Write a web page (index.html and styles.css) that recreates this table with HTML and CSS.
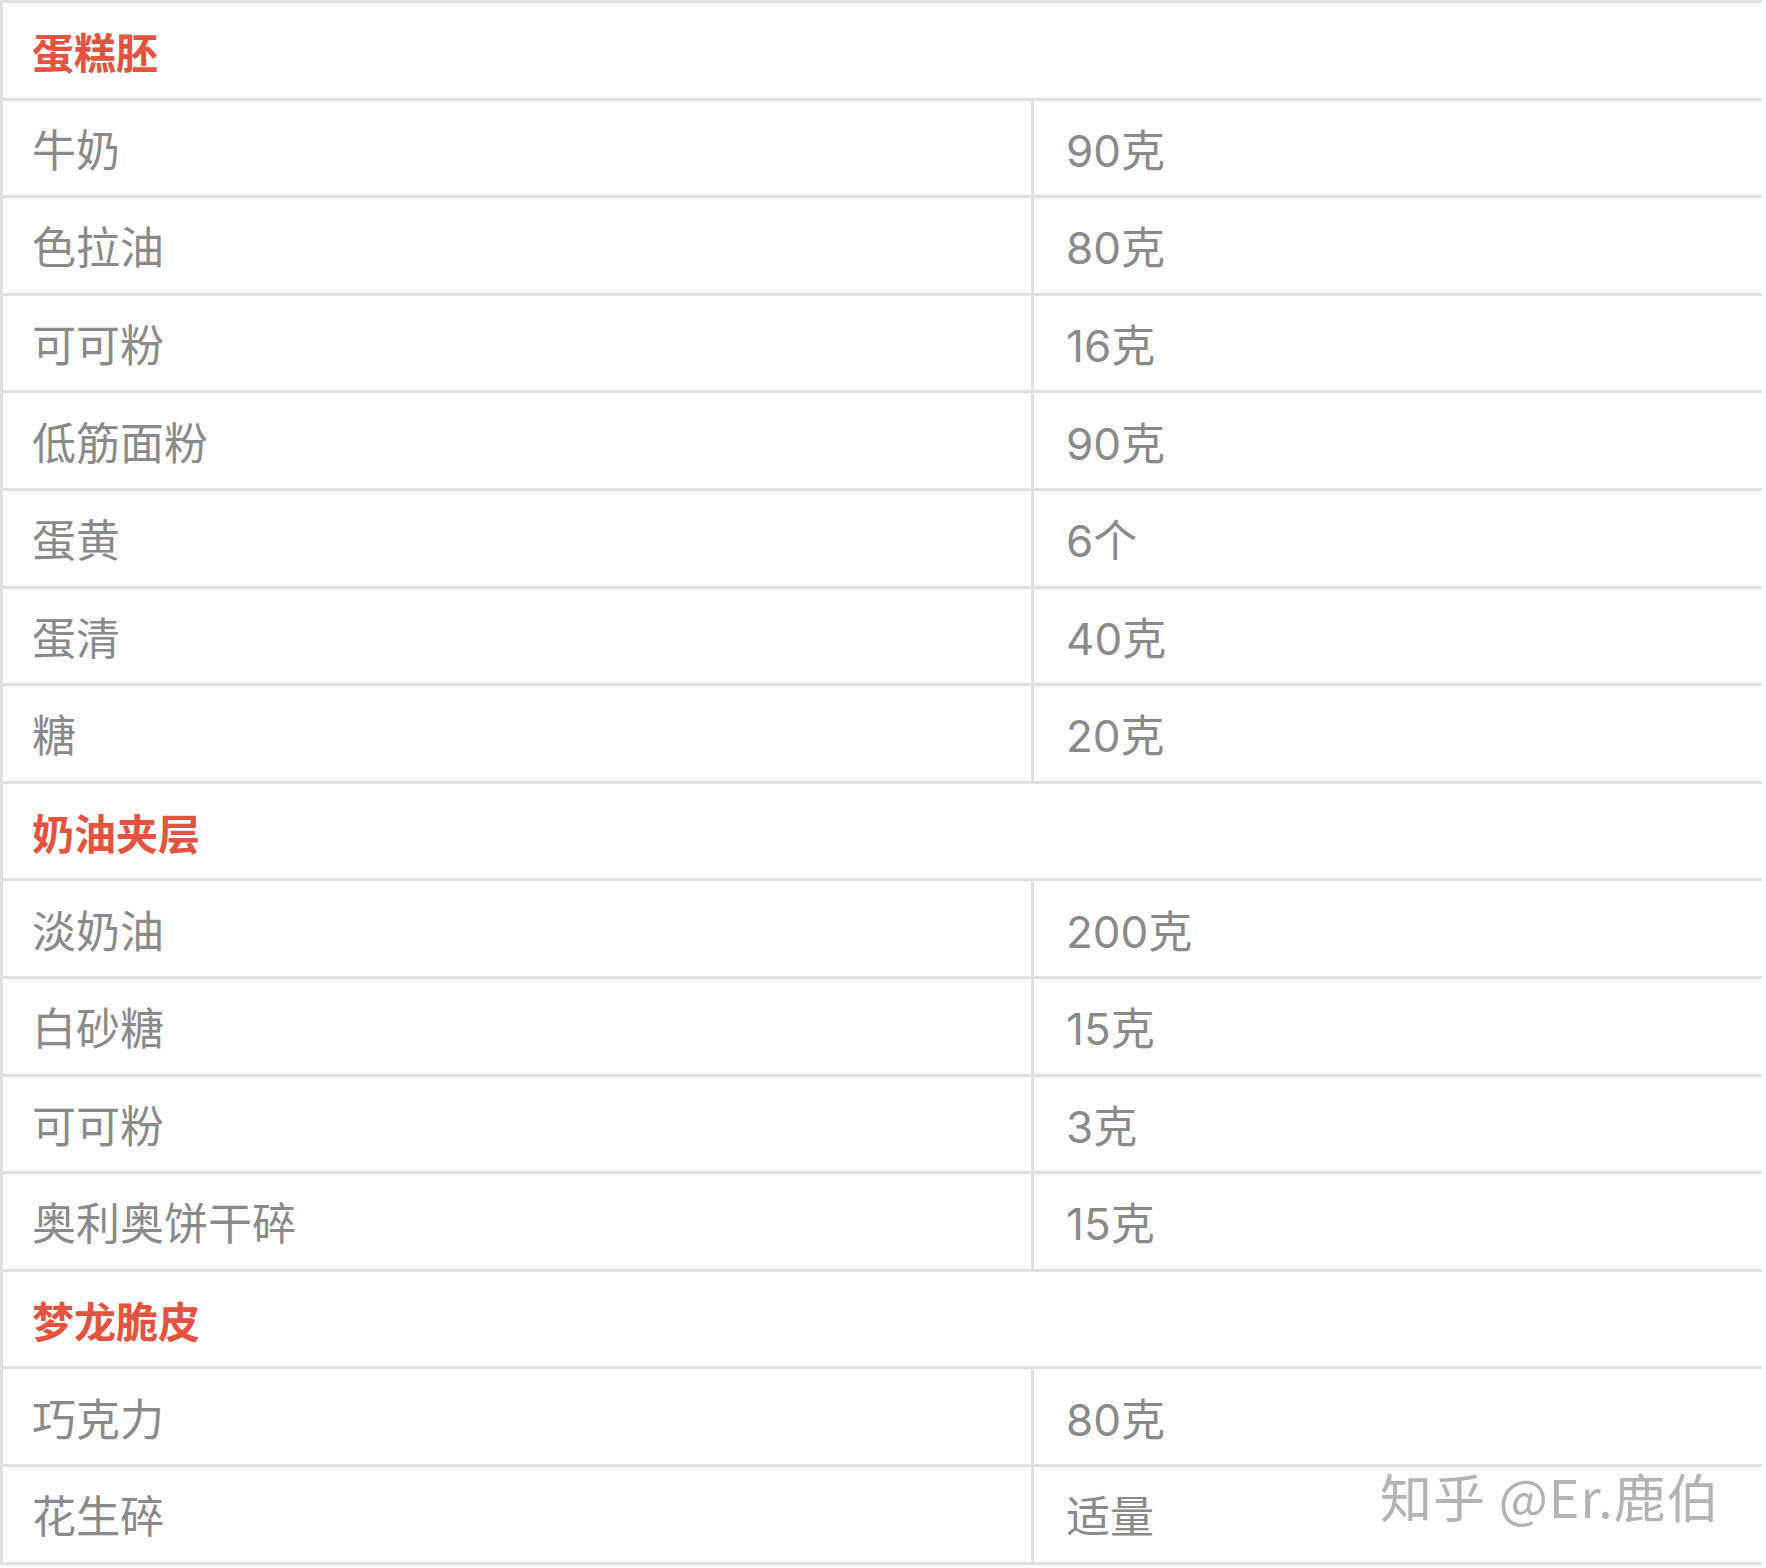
FILE: index.html
```html
<!DOCTYPE html>
<html lang="zh-CN">
<head>
<meta charset="utf-8">
<title>配方</title>
<link rel="stylesheet" href="styles.css">
</head>
<body>
<div class="page">
  <div class="table">
    <div class="row head"><div class="cell">蛋糕胚</div></div>
    <div class="row"><div class="cell name">牛奶</div><div class="cell val">90克</div></div>
    <div class="row"><div class="cell name">色拉油</div><div class="cell val">80克</div></div>
    <div class="row"><div class="cell name">可可粉</div><div class="cell val">16克</div></div>
    <div class="row"><div class="cell name">低筋面粉</div><div class="cell val">90克</div></div>
    <div class="row"><div class="cell name">蛋黄</div><div class="cell val">6个</div></div>
    <div class="row"><div class="cell name">蛋清</div><div class="cell val">40克</div></div>
    <div class="row"><div class="cell name">糖</div><div class="cell val">20克</div></div>
    <div class="row head"><div class="cell">奶油夹层</div></div>
    <div class="row"><div class="cell name">淡奶油</div><div class="cell val">200克</div></div>
    <div class="row"><div class="cell name">白砂糖</div><div class="cell val">15克</div></div>
    <div class="row"><div class="cell name">可可粉</div><div class="cell val">3克</div></div>
    <div class="row"><div class="cell name">奥利奥饼干碎</div><div class="cell val">15克</div></div>
    <div class="row head"><div class="cell">梦龙脆皮</div></div>
    <div class="row"><div class="cell name">巧克力</div><div class="cell val">80克</div></div>
    <div class="row"><div class="cell name">花生碎</div><div class="cell val">适量</div></div>
  </div>
  <div class="watermark">知乎 @Er.鹿伯</div>
</div>
</body>
</html>
```
FILE: styles.css
```css
html, body {
  margin: 0;
  padding: 0;
  background: #ffffff;
}
.page {
  position: relative;
  width: 1766px;
  height: 1568px;
  overflow: hidden;
  font-family: Inter, "Noto Sans CJK SC", sans-serif;
}
.table {
  width: 1759px;
  border-top: 3px solid #e0e0e0;
  border-left: 3px solid #e0e0e0;
}
.row {
  display: flex;
  height: 94.6px;
  border-bottom: 3px solid #e0e0e0;
}
.cell {
  display: flex;
  align-items: center;
  padding-left: 29px;
  font-size: 44px;
  color: #8a8a8a;
}
.name {
  width: 999px;
  border-right: 3px solid #e0e0e0;
}
.val {
  flex: 1;
  padding-left: 32px;
}
.head .cell {
  color: #e4533f;
  font-weight: 700;
  font-size: 42px;
  font-family: "Noto Sans CJK SC", sans-serif;
}
.watermark {
  position: absolute;
  left: 1380px;
  top: 1458px;
  font-size: 52px;
  color: #b3b3b3;
  font-family: "Noto Sans CJK SC", sans-serif;
  letter-spacing: 1px;
}
```
